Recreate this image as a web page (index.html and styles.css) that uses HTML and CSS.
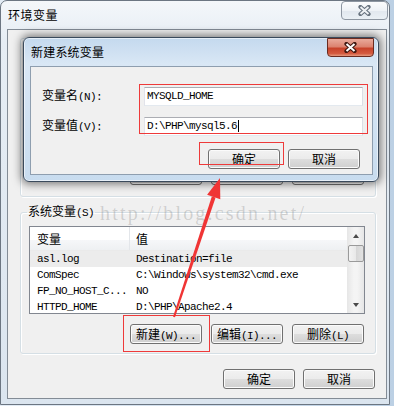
FILE: index.html
```html
<!DOCTYPE html>
<html>
<head>
<meta charset="utf-8">
<title>环境变量</title>
<link rel="stylesheet" href="styles.css">
</head>
<body>
<div class="win">
    <div class="win-bar">
        <span class="win-title">环境变量</span>
        <span class="cap-x">
            <svg width="13" height="11" viewBox="0 0 13 11"><path d="M2.5 2 L10.5 9 M10.5 2 L2.5 9" stroke="#66717d" stroke-width="4.2" stroke-linecap="round"/><path d="M2.5 2 L10.5 9 M10.5 2 L2.5 9" stroke="#eef1f4" stroke-width="2"/></svg>
        </span>
    </div>
    <div class="win-body">
        <div class="grp grp-user">
            <div class="grp-btns">
                <button class="btn">新建<span class="m">(N)...</span></button>
                <button class="btn">编辑<span class="m">(E)...</span></button>
                <button class="btn">删除<span class="m">(D)</span></button>
            </div>
        </div>
        <fieldset class="grp grp-sys">
            <legend>系统变量<span class="m">(S)</span></legend>
            <div class="lst">
                <div class="lst-main">
                    <div class="lst-head"><span class="c1">变量</span><span class="c2">值</span></div>
                    <div class="lst-row sel"><span class="c1 m">asl.log</span><span class="c2 m">Destination=file</span></div>
                    <div class="lst-row"><span class="c1 m">ComSpec</span><span class="c2 m">C:\Windows\system32\cmd.exe</span></div>
                    <div class="lst-row"><span class="c1 m">FP_NO_HOST_C...</span><span class="c2 m">NO</span></div>
                    <div class="lst-row"><span class="c1 m">HTTPD_HOME</span><span class="c2 m">D:\PHP\Apache2.4</span></div>
                </div>
                <div class="sb">
                    <span class="sb-btn"><i class="tri-up"></i></span>
                    <span class="sb-thumb"></span>
                    <span class="sb-track"></span>
                    <span class="sb-btn"><i class="tri-down"></i></span>
                </div>
            </div>
            <div class="grp-btns">
                <button class="btn">新建<span class="m">(W)...</span></button>
                <button class="btn">编辑<span class="m">(I)...</span></button>
                <button class="btn">删除<span class="m">(L)</span></button>
            </div>
        </fieldset>
        <div class="win-btns">
            <button class="btn">确定</button>
            <button class="btn">取消</button>
        </div>
    </div>
</div>

<div class="dlg">
    <div class="dlg-bar">
        <span class="dlg-title">新建系统变量</span>
        <span class="cap-x cap-red">
            <svg width="13" height="11" viewBox="0 0 13 11"><path d="M2.5 2 L10.5 9 M10.5 2 L2.5 9" stroke="#3e1710" stroke-width="4.2" stroke-linecap="round"/><path d="M2.5 2 L10.5 9 M10.5 2 L2.5 9" stroke="#fff" stroke-width="2"/></svg>
        </span>
    </div>
    <div class="dlg-body">
        <div class="dlg-form">
            <label>变量名<span class="m">(N):</span></label>
            <div class="tb m">MYSQLD_HOME</div>
            <label>变量值<span class="m">(V):</span></label>
            <div class="tb m">D:\PHP\mysql5.6<i class="caret"></i></div>
        </div>
        <div class="dlg-btns">
            <button class="btn">确定</button>
            <button class="btn">取消</button>
        </div>
    </div>
</div>

<div class="mark">http://blog.csdn.net/</div>

<div class="hl hl-inputs"></div>
<div class="hl hl-ok"></div>
<div class="hl hl-new"></div>

<svg class="arrow" width="394" height="406" viewBox="0 0 394 406">
    <polygon points="175,317.3 173,316.7 211.8,196.4 215.6,197.6" fill="#f03535"/>
    <polygon points="220,178 207.1,194.8 220.3,199.2" fill="#f03535"/>
</svg>
</body>
</html>
```

FILE: styles.css
```css
* {
    box-sizing: border-box;
}
body {
    margin: 0;
    width: 394px;
    height: 406px;
    overflow: hidden;
    position: relative;
    background: linear-gradient(90deg, #e3ecf5, #bcd0e4);
    font: 12px/14px "Noto Sans CJK SC", sans-serif;
    color: #000;
}
.m {
    font-family: "Liberation Mono", monospace;
    font-size: 11px;
    letter-spacing: -0.6px;
}

/* outer window */
.win {
    width: 390px;
    height: 405px;
    border: 1px solid #6c7682;
    border-radius: 7px 7px 0 0;
    background: linear-gradient(180deg, #f4f7fa 0, #e6edf4 40px, #dbe5ef 100%);
    display: flex;
    flex-direction: column;
}
.win-bar {
    height: 28px;
    display: flex;
    justify-content: space-between;
    align-items: flex-start;
    padding-left: 7px;
}
.win-title {
    margin-top: 7px;
    letter-spacing: 0.5px;
}
.cap-x {
    width: 47px;
    height: 19px;
    margin-right: 1px;
    border: 1px solid #8d96a1;
    border-radius: 4px;
    background: linear-gradient(180deg, #fbfcfd 0, #eef2f6 50%, #e1e7ee 51%, #eaf0f5 100%);
    display: flex;
    align-items: center;
    justify-content: center;
}
.cap-red {
    margin-right: 4px;
    border-color: #6a2b20;
    border-radius: 0 0 4px 4px;
    background: linear-gradient(180deg, #e9aa9b 0, #dc8370 45%, #c7432b 55%, #d45a3f 85%, #e59a80 100%);
}
.win-body {
    height: 370px;
    margin: 0 2px 0 6px;
    border: 1px solid #838c96;
    background: #f0f0f0;
    padding: 0 10px 0 12px;
}
.grp {
    border: 1px solid #d5dfe5;
    border-radius: 3px;
    box-shadow: inset 1px 1px 0 #fff, 1px 1px 0 #fff;
}
.grp-user {
    margin-top: 8px;
    height: 159px;
    display: flex;
    flex-direction: column;
    justify-content: flex-end;
    padding: 0 11px 11px 0;
}
.grp-btns {
    display: flex;
    justify-content: flex-end;
    gap: 9px;
}
.grp-sys {
    margin: 7px 0 0;
    padding: 6px 10px 9px 8px;
    min-width: 0;
}
.grp-sys legend {
    padding: 0 1px;
    margin-left: -2px;
    line-height: 14px;
}
.grp-sys .grp-btns {
    margin-top: 10px;
    padding-right: 1px;
}

/* list view */
.lst {
    height: 88px;
    border: 1px solid #828790;
    background: #fff;
    display: flex;
}
.lst-main {
    flex: 1;
    overflow: hidden;
}
.lst-head {
    height: 24px;
    display: flex;
    line-height: 24px;
    background: linear-gradient(180deg, #fff 0, #fff 55%, #f6f7f9 56%, #eef0f2 100%);
    border-bottom: 1px solid #eaeaea;
}
.lst-head .c1 {
    border-right: 1px solid #e3e6ea;
}
.lst-row {
    height: 16px;
    line-height: 16px;
    display: flex;
    white-space: nowrap;
}
.lst-row.sel {
    background: #ececec;
}
.c1 {
    width: 100px;
    flex: none;
    padding-left: 7px;
}
.c2 {
    padding-left: 6px;
}
.sb {
    width: 17px;
    display: flex;
    flex-direction: column;
    background: linear-gradient(90deg, #e6e6e6, #f4f4f4 40%, #f4f4f4 60%, #e6e6e6);
}
.sb-btn {
    height: 17px;
    display: flex;
    align-items: center;
    justify-content: center;
}
.tri-up,
.tri-down {
    width: 0;
    height: 0;
    border-left: 3.5px solid transparent;
    border-right: 3.5px solid transparent;
}
.tri-up {
    border-bottom: 4px solid #4a4a4a;
}
.tri-down {
    border-top: 4px solid #4a4a4a;
}
.sb-thumb {
    height: 17px;
    margin: 1px 0 0 1px;
    width: 16px;
    border: 1px solid #9a9a9a;
    border-radius: 2px;
    background: linear-gradient(90deg, #f3f3f3, #e8e8e8 50%, #d6d6d6 51%, #e2e2e2);
}
.sb-track {
    flex: 1;
}

/* buttons */
.btn {
    width: 72px;
    height: 20px;
    padding: 0;
    border: 1px solid #707070;
    border-radius: 3px;
    background: linear-gradient(180deg, #f2f2f2 0, #ebebeb 50%, #dddddd 51%, #cfcfcf 100%);
    box-shadow: inset 0 0 0 1px #fbfbfb;
    font: 12px/18px "Noto Sans CJK SC", sans-serif;
    color: #000;
    white-space: nowrap;
}
.win-btns {
    display: flex;
    justify-content: flex-end;
    gap: 8px;
    margin: 15px 1px 0 0;
}

/* new variable dialog, floating over the window */
.dlg {
    position: absolute;
    left: 23px;
    top: 37px;
    width: 356px;
    height: 145px;
    border: 1px solid #3a4a5c;
    border-radius: 6px;
    background: linear-gradient(180deg, #c4d9ee 0, #d9e7f5 26px, #c8dcef 100%);
    box-shadow: 0 0 9px 2px rgba(0, 0, 0, 0.5), inset 0 0 0 1px rgba(255, 255, 255, 0.55);
    display: flex;
    flex-direction: column;
}
.dlg-bar {
    height: 28px;
    flex: none;
    display: flex;
    justify-content: space-between;
    align-items: flex-start;
    padding-left: 7px;
}
.dlg-title {
    margin-top: 7px;
    letter-spacing: 0.2px;
}
.dlg-body {
    flex: 1;
    margin: 0 5px 6px 6px;
    border: 1px solid #8e9eaf;
    background: #f0f0f0;
    padding: 18px 9px 0 11px;
}
.dlg-form {
    display: grid;
    grid-template-columns: 102px 219px;
    row-gap: 8px;
    align-items: center;
}
.dlg-form label {
    line-height: 19px;
}
.tb {
    height: 19px;
    line-height: 17px;
    padding-left: 2px;
    border: 1px solid;
    border-color: #abadb3 #dbdfe6 #e3e9ef #e2e3ea;
    background: #fff;
    display: flex;
    align-items: center;
}
.caret {
    width: 1px;
    height: 12px;
    margin-left: 1px;
    background: #000;
}
.dlg-btns {
    display: flex;
    justify-content: flex-end;
    gap: 8px;
    margin: 12px 3px 0 0;
}

/* annotations */
.mark {
    position: absolute;
    left: 100px;
    top: 203px;
    font: 20px/20px "Liberation Serif", serif;
    letter-spacing: 2.2px;
    color: rgba(120, 120, 120, 0.28);
}
.hl {
    position: absolute;
    border: 1px solid #ee3a3a;
}
.hl-inputs {
    left: 139px;
    top: 84px;
    width: 229px;
    height: 50px;
}
.hl-ok {
    left: 199px;
    top: 142px;
    width: 85px;
    height: 23px;
}
.hl-new {
    left: 123px;
    top: 315px;
    width: 87px;
    height: 37px;
}
.arrow {
    position: absolute;
    left: 0;
    top: 0;
    pointer-events: none;
}
```
